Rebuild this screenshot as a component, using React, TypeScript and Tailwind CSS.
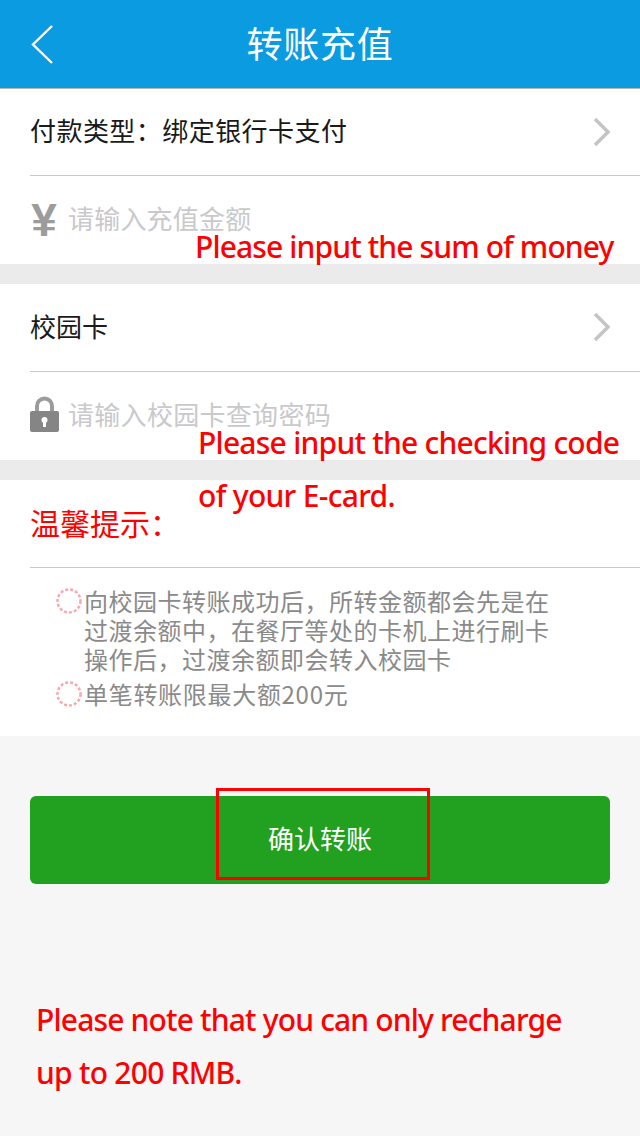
const cjk = "font-['Noto_Sans_CJK_SC',sans-serif]";
const note = "absolute whitespace-nowrap font-['Noto_Sans',sans-serif] text-[30px] font-medium leading-[28px] text-[#fe0000]";

function Dotted() {
  return (
    <svg width="28" height="28" viewBox="0 0 28 28" className="shrink-0">
      <circle cx="14" cy="14" r="11.5" fill="none" stroke="#f9a8ae" strokeWidth="2.5" strokeDasharray="3 2" />
    </svg>
  );
}

function Chevron() {
  return (
    <svg width="18" height="30" viewBox="0 0 18 30" className="mb-[1px] mr-[29px] shrink-0">
      <path d="M2 2 L15 15 L2 28" fill="none" stroke="#c4c4c4" strokeWidth="3.500" />
    </svg>
  );
}

export default function App() {
  return (
    <div className={`relative h-[1136px] w-[640px] overflow-hidden bg-[#f6f6f6] ${cjk}`}>
      <header className="relative flex h-[88px] items-center justify-center bg-[#0a9be0] text-[36px] text-white">
        <svg width="24" height="40" viewBox="0 0 24 40" className="absolute left-[31px] top-[25px]">
          <path d="M21 1 L2 19.500 L21 38" fill="none" stroke="#fff" strokeWidth="2.400" />
        </svg>
        <span className="mb-[5px] tracking-[0.8px] leading-none">转账充值</span>
      </header>
      <div className="h-px bg-[#b5b5b5]" />

      <section className="bg-white">
        <div className="ml-[30px] flex h-[87px] items-center justify-between border-b border-[#c8c8c8] text-[26px] text-[#1a1a1a]">
          <span className="mb-[5px] leading-none tracking-[0.45px]">付款类型：绑定银行卡支付</span>
          <Chevron />
        </div>
        <div className="flex h-[88px] items-center gap-[10px] pl-[30px] text-[26px] text-[#c9c9cc]">
          <span className="w-[28px] text-center font-['Liberation_Sans',sans-serif] text-[46px] font-bold leading-none text-[#9c9c9c]">¥</span>
          <span className="mb-[5px] leading-none tracking-[0.2px]">请输入充值金额</span>
        </div>
      </section>
      <div className="h-[20px] bg-[#ebebeb]" />

      <section className="bg-white">
        <div className="ml-[30px] flex h-[88px] items-center justify-between border-b border-[#c8c8c8] text-[26px] text-[#1a1a1a]">
          <span className="mb-[4px] leading-none">校园卡</span>
          <Chevron />
        </div>
        <div className="flex h-[88px] items-center gap-[9px] pl-[30px] text-[26px] text-[#c9c9cc]">
          <svg width="29" height="36" viewBox="0 0 29 36" className="mb-[4px] shrink-0">
            <path d="M7 17 V10 a7.500 7.500 0 0 1 15 0 V17" fill="none" stroke="#9c9c9c" strokeWidth="4" />
            <rect x="0" y="15" width="29" height="21" rx="2" fill="#858585" />
            <circle cx="14.500" cy="24" r="3" fill="#fff" />
            <rect x="13" y="25" width="3" height="6" fill="#fff" />
          </svg>
          <span className="mb-[5px] leading-none tracking-[0.3px]">请输入校园卡查询密码</span>
        </div>
      </section>
      <div className="h-[20px] bg-[#ebebeb]" />

      <section className="h-[256px] bg-white">
        <div className="ml-[30px] flex h-[88px] items-center border-b border-[#c8c8c8] text-[30px] text-[#fe0000]">
          <span className="mb-[3px] leading-none">温馨提示：</span>
        </div>
        <ul className="pl-[55px] pt-[18px] text-[24px] leading-[29px] text-[#8a8a8a]">
          <li className="flex">
            <span className="mr-[1px] mt-[1px]"><Dotted /></span>
            <span className="w-[480px] tracking-[0.5px]">向校园卡转账成功后，所转金额都会先是在过渡余额中，在餐厅等处的卡机上进行刷卡操作后，过渡余额即会转入校园卡</span>
          </li>
          <li className="mt-[6px] flex">
            <span className="mr-[1px] mt-[1px]"><Dotted /></span>
            <span className="tracking-[0.7px]">单笔转账限最大额200元</span>
          </li>
        </ul>
      </section>

      <div className="px-[30px] pt-[60px]">
        <button className="flex h-[88px] w-full items-center justify-center rounded-[6px] bg-[#22a01f] text-[26px] text-white">
          <span className="mb-[4px] leading-none">确认转账</span>
        </button>
      </div>

      <div className="absolute left-[216px] top-[788px] h-[92px] w-[214px] border-[3px] border-[#fe0000]" />
      <span className={`${note} left-[195px] top-[233px] tracking-[-0.87px]`}>Please input the sum of money</span>
      <span className={`${note} left-[198px] top-[429px] tracking-[-0.75px]`}>Please input the checking code</span>
      <span className={`${note} left-[198px] top-[482px] tracking-[-0.7px]`}>of your E-card.</span>
      <span className={`${note} left-[36px] top-[1006px] tracking-[-0.83px]`}>Please note that you can only recharge</span>
      <span className={`${note} left-[36px] top-[1059px] tracking-[-0.75px]`}>up to 200 RMB.</span>
    </div>
  );
}
